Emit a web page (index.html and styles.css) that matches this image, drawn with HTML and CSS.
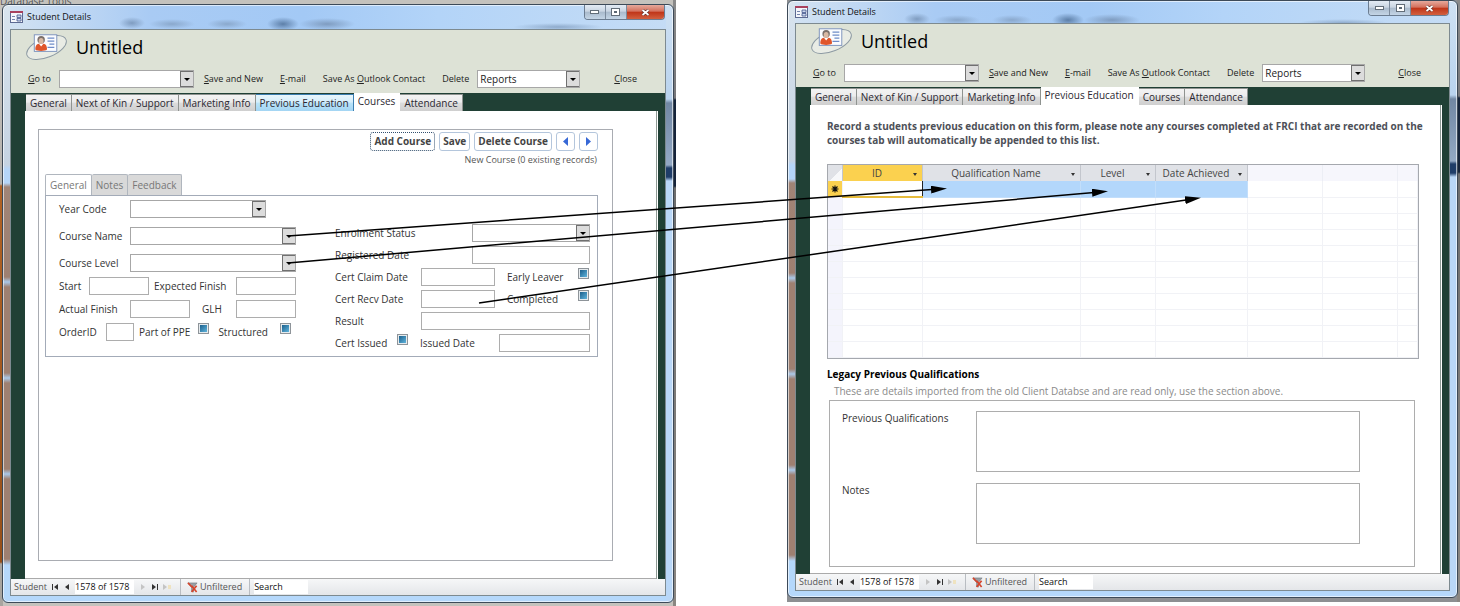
FILE: index.html
```html
<!DOCTYPE html>
<html lang="en">
<head>
  <meta charset="UTF-8"/>
  <meta name="viewport" content="width=device-width, initial-scale=1.0"/>
  <title>Student Details</title>
  <link rel="stylesheet" href="styles.css">
</head>
<body>
  <!-- Shared icons -->
  <svg class="defs" aria-hidden="true">
    <symbol id="icon-form" viewBox="0 0 13 12">
      <rect x="0.5" y="0.5" width="12" height="11" fill="#f4f6fb" stroke="#5d6a92"/>
      <rect x="0" y="0" width="13" height="2" fill="#a8415e"/>
      <path d="M2 5.500h3M2 8.500h3" stroke="#7484ad"/>
      <path d="M7 4h4v2.500H7zM7 7.500h4V10H7z" fill="#cdd7ee" stroke="#43558c" stroke-width="0.800"/>
    </symbol>
    <symbol id="icon-contact" viewBox="0 0 44 30">
      <ellipse cx="21" cy="15.500" rx="21.500" ry="10" transform="rotate(-22 21 15.500)" fill="#e9ece5" stroke="#8d9aa3"/>
      <rect x="8.500" y="2.500" width="23" height="17" fill="#fbfcff" stroke="#7f95bd"/>
      <path d="M22 6h7M22 9h7M24 12h5M22 15.500h7" stroke="#6f8cc8" stroke-width="1.300"/>
      <path d="M9.500 17.500c0-5 2.500-6 6-6s6 1 6 6c-2 2-10 2-12 0z" fill="#e0562b"/>
      <path d="M13 11.500l2.500 3 2.500-3z" fill="#fff"/>
      <circle cx="15.500" cy="7.500" r="3.800" fill="#7b706b"/>
      <ellipse cx="15.500" cy="8.800" rx="2.500" ry="3" fill="#d9b9a3"/>
    </symbol>
    <symbol id="icon-filter" viewBox="0 0 12 12">
      <path d="M1 1h10L7 6v5l-2-1V6z" fill="#9aa0a6" stroke="#6b7076" stroke-width="0.600"/>
      <path d="M1 1l5 5M5 4l5.500 7M10.500 4L5 11" stroke="#d6452c" stroke-width="1.800" fill="none"/>
    </symbol>
  </svg>

  <main class="board">
    <!-- Source form -->
    <section class="capture capture-left">
      <span class="behind">Database Tools</span>
      <div class="window">
        <div class="titlebar">
          <svg class="form-icon"><use href="#icon-form"/></svg>
          <span class="caption">Student Details</span>
          <div class="window-buttons">
            <button class="win-btn" aria-label="Minimize"><i class="min"></i></button>
            <button class="win-btn" aria-label="Restore"><i class="max"></i></button>
            <button class="win-btn win-close" aria-label="Close window"><svg viewBox="0 0 9 7"><path d="M1.500 1l6 5M7.500 1l-6 5" stroke="#5b2a24" stroke-width="3"/><path d="M1.500 1l6 5M7.500 1l-6 5" stroke="#fff" stroke-width="1.800"/></svg></button>
          </div>
        </div>
        <div class="client">
          <header class="form-header">
            <div class="heading">
              <svg class="contact-icon"><use href="#icon-contact"/></svg>
              <h1>Untitled</h1>
            </div>
            <div class="toolbar">
              <label for="goto-a"><u>G</u>o to</label>
              <select id="goto-a" class="combo goto"><option></option></select>
              <nav class="actions">
                <a href="#"><u>S</u>ave and New</a>
                <a href="#"><u>E</u>-mail</a>
                <a href="#">Save As <u>O</u>utlook Contact</a>
                <a href="#">Delete</a>
              </nav>
              <select class="combo reports" aria-label="Reports"><option>Reports</option></select>
              <a href="#" class="close-link"><u>C</u>lose</a>
            </div>
          </header>

          <div class="form-body">
            <div class="tabs" role="tablist">
              <button class="tab" role="tab">General</button>
              <button class="tab" role="tab">Next of Kin / Support</button>
              <button class="tab" role="tab">Marketing Info</button>
              <button class="tab hot" role="tab">Previous Education</button>
              <button class="tab active" role="tab">Courses</button>
              <button class="tab" role="tab">Attendance</button>
            </div>
            <div class="page page-courses">
              <div class="subform">
                <div class="course-actions">
                  <button class="cmd focused">Add Course</button>
                  <button class="cmd">Save</button>
                  <button class="cmd">Delete Course</button>
                  <button class="cmd arrow" aria-label="Previous course"><svg viewBox="0 0 5 9"><path d="M5 0v9L0 4.500z" fill="#3768d6"/></svg></button>
                  <button class="cmd arrow" aria-label="Next course"><svg viewBox="0 0 5 9"><path d="M0 0v9l5-4.500z" fill="#3768d6"/></svg></button>
                </div>
                <p class="record-note">New Course (0 existing records)</p>
                <div class="subtabs" role="tablist">
                  <button class="subtab active" role="tab">General</button>
                  <button class="subtab" role="tab">Notes</button>
                  <button class="subtab" role="tab">Feedback</button>
                </div>
                <div class="details">
                  <div class="column column-left">
                    <div class="row tall"><label class="lead" for="year">Year Code</label><select id="year" class="combo year"><option></option></select></div>
                    <div class="row tall"><label class="lead" for="course">Course Name</label><select id="course" class="combo fill"><option></option></select></div>
                    <div class="row"><label class="lead" for="level">Course Level</label><select id="level" class="combo fill"><option></option></select></div>
                    <div class="row"><label class="lead-start" for="start">Start</label><input id="start" class="box date" type="text"><label class="after" for="expected">Expected Finish</label><input id="expected" class="box date end" type="text"></div>
                    <div class="row"><label class="lead" for="actual">Actual Finish</label><input id="actual" class="box date" type="text"><label class="after-wide" for="glh">GLH</label><input id="glh" class="box date end" type="text"></div>
                    <div class="row"><label class="lead-order" for="order">OrderID</label><input id="order" class="box order" type="text"><label class="after" for="ppe">Part of PPE</label><input id="ppe" class="check ppe" type="checkbox"><label class="after-check" for="structured">Structured</label><input id="structured" class="check end" type="checkbox"></div>
                  </div>
                  <div class="column column-right">
                    <div class="row"><label for="status">Enrolment Status</label><select id="status" class="combo wide end"><option></option></select></div>
                    <div class="row"><label for="registered">Registered Date</label><input id="registered" class="box wide end" type="text"></div>
                    <div class="row"><label class="lead-right" for="claim">Cert Claim Date</label><input id="claim" class="box cert" type="text"><label class="after-wide" for="leaver">Early Leaver</label><input id="leaver" class="check end" type="checkbox"></div>
                    <div class="row"><label class="lead-right" for="recv">Cert Recv Date</label><input id="recv" class="box cert" type="text"><label class="after-wide" for="completed">Completed</label><input id="completed" class="check end" type="checkbox"></div>
                    <div class="row"><label class="lead-right" for="result">Result</label><input id="result" class="box fill" type="text"></div>
                    <div class="row"><label class="lead-issued" for="issued">Cert Issued</label><input id="issued" class="check" type="checkbox"><label class="after-wide" for="issued-date">Issued Date</label><input id="issued-date" class="box issued end" type="text"></div>
                  </div>
                </div>
              </div>
            </div>
          </div>

          <footer class="statusbar">
            <span class="status-name">Student</span>
            <button class="nav-btn" aria-label="First record"><svg viewBox="0 0 8 8"><path d="M1 1h1v6H1zM7 1v6L3 4z"/></svg></button>
            <button class="nav-btn" aria-label="Previous record"><svg viewBox="0 0 8 8"><path d="M6 1v6L2 4z"/></svg></button>
            <input class="position" type="text" value="1578 of 1578" aria-label="Current record">
            <button class="nav-btn dim" aria-label="Next record"><svg viewBox="0 0 8 8"><path d="M2 1v6l4-3z"/></svg></button>
            <button class="nav-btn" aria-label="Last record"><svg viewBox="0 0 8 8"><path d="M6 1h1v6H6zM1 1v6l4-3z"/></svg></button>
            <button class="nav-btn dim" aria-label="New record"><svg viewBox="0 0 8 8"><path d="M0 1v6l4-3z"/><path d="M5 2h3v4H5z" fill="#efe3c0"/></svg></button>
            <button class="filter"><svg><use href="#icon-filter"/></svg>Unfiltered</button>
            <input class="search" type="text" value="Search" aria-label="Search">
          </footer>
        </div>
      </div>
    </section>

    <!-- Target form -->
    <section class="capture capture-right">
      <div class="window">
        <div class="titlebar">
          <svg class="form-icon"><use href="#icon-form"/></svg>
          <span class="caption">Student Details</span>
          <div class="window-buttons">
            <button class="win-btn" aria-label="Minimize"><i class="min"></i></button>
            <button class="win-btn" aria-label="Restore"><i class="max"></i></button>
            <button class="win-btn win-close" aria-label="Close window"><svg viewBox="0 0 9 7"><path d="M1.500 1l6 5M7.500 1l-6 5" stroke="#5b2a24" stroke-width="3"/><path d="M1.500 1l6 5M7.500 1l-6 5" stroke="#fff" stroke-width="1.800"/></svg></button>
          </div>
        </div>
        <div class="client">
          <header class="form-header">
            <div class="heading">
              <svg class="contact-icon"><use href="#icon-contact"/></svg>
              <h1>Untitled</h1>
            </div>
            <div class="toolbar">
              <label for="goto-b"><u>G</u>o to</label>
              <select id="goto-b" class="combo goto"><option></option></select>
              <nav class="actions">
                <a href="#"><u>S</u>ave and New</a>
                <a href="#"><u>E</u>-mail</a>
                <a href="#">Save As <u>O</u>utlook Contact</a>
                <a href="#">Delete</a>
              </nav>
              <select class="combo reports" aria-label="Reports"><option>Reports</option></select>
              <a href="#" class="close-link"><u>C</u>lose</a>
            </div>
          </header>

          <div class="form-body">
            <div class="tabs" role="tablist">
              <button class="tab" role="tab">General</button>
              <button class="tab" role="tab">Next of Kin / Support</button>
              <button class="tab" role="tab">Marketing Info</button>
              <button class="tab active" role="tab">Previous Education</button>
              <button class="tab" role="tab">Courses</button>
              <button class="tab" role="tab">Attendance</button>
            </div>
            <div class="page page-education">
              <p class="intro">Record a students previous education on this form, please note any courses completed at FRCI that are recorded on the courses tab will automatically be appended to this list.</p>
              <div class="datasheet">
                <table>
                  <colgroup><col class="c-sel"><col class="c-id"><col class="c-name"><col class="c-level"><col class="c-date"><col class="c-free"><col class="c-free"><col></colgroup>
                  <thead>
                    <tr>
                      <th class="corner"></th>
                      <th class="current"><div class="th">ID<i class="caret"></i></div></th>
                      <th><div class="th">Qualification Name<i class="caret"></i></div></th>
                      <th><div class="th">Level<i class="caret"></i></div></th>
                      <th><div class="th">Date Achieved<i class="caret"></i></div></th>
                      <th class="free"></th><th class="free"></th><th class="free"></th>
                    </tr>
                  </thead>
                  <tbody>
                    <tr class="new-row"><td><svg viewBox="0 0 8 8"><path d="M4 0.500v7M0.500 4h7M1.500 1.500l5 5M6.500 1.500l-5 5" stroke="#111" stroke-width="1.100"/></svg></td><td></td><td></td><td></td><td></td><td></td><td></td><td></td></tr>
                    <tr><td></td><td></td><td></td><td></td><td></td><td></td><td></td><td></td></tr>
                    <tr><td></td><td></td><td></td><td></td><td></td><td></td><td></td><td></td></tr>
                    <tr><td></td><td></td><td></td><td></td><td></td><td></td><td></td><td></td></tr>
                    <tr><td></td><td></td><td></td><td></td><td></td><td></td><td></td><td></td></tr>
                    <tr><td></td><td></td><td></td><td></td><td></td><td></td><td></td><td></td></tr>
                    <tr><td></td><td></td><td></td><td></td><td></td><td></td><td></td><td></td></tr>
                    <tr><td></td><td></td><td></td><td></td><td></td><td></td><td></td><td></td></tr>
                    <tr><td></td><td></td><td></td><td></td><td></td><td></td><td></td><td></td></tr>
                    <tr><td></td><td></td><td></td><td></td><td></td><td></td><td></td><td></td></tr>
                    <tr><td></td><td></td><td></td><td></td><td></td><td></td><td></td><td></td></tr>
                  </tbody>
                </table>
              </div>
              <h2>Legacy Previous Qualifications</h2>
              <p class="hint">These are details imported from the old Client Databse and are read only, use the section above.</p>
              <div class="legacy">
                <div class="memo"><label for="prev">Previous Qualifications</label><textarea id="prev" readonly></textarea></div>
                <div class="memo"><label for="notes">Notes</label><textarea id="notes" readonly></textarea></div>
              </div>
            </div>
          </div>

          <footer class="statusbar">
            <span class="status-name">Student</span>
            <button class="nav-btn" aria-label="First record"><svg viewBox="0 0 8 8"><path d="M1 1h1v6H1zM7 1v6L3 4z"/></svg></button>
            <button class="nav-btn" aria-label="Previous record"><svg viewBox="0 0 8 8"><path d="M6 1v6L2 4z"/></svg></button>
            <input class="position" type="text" value="1578 of 1578" aria-label="Current record">
            <button class="nav-btn dim" aria-label="Next record"><svg viewBox="0 0 8 8"><path d="M2 1v6l4-3z"/></svg></button>
            <button class="nav-btn" aria-label="Last record"><svg viewBox="0 0 8 8"><path d="M6 1h1v6H6zM1 1v6l4-3z"/></svg></button>
            <button class="nav-btn dim" aria-label="New record"><svg viewBox="0 0 8 8"><path d="M0 1v6l4-3z"/><path d="M5 2h3v4H5z" fill="#efe3c0"/></svg></button>
            <button class="filter"><svg><use href="#icon-filter"/></svg>Unfiltered</button>
            <input class="search" type="text" value="Search" aria-label="Search">
          </footer>
        </div>
      </div>
    </section>

    <!-- Field mapping arrows -->
    <svg class="links" viewBox="0 0 1460 606" preserveAspectRatio="none" aria-hidden="true">
      <defs>
        <marker id="head" viewBox="0 0 16 8" refX="8" refY="4" markerWidth="16" markerHeight="8" markerUnits="userSpaceOnUse" orient="auto">
          <path d="M0 0l16 4-16 4z"/>
        </marker>
      </defs>
      <path d="M288 236L939 189" marker-end="url(#head)"/>
      <path d="M288 263L1100 192" marker-end="url(#head)"/>
      <path d="M479 303L1193 199" marker-end="url(#head)"/>
    </svg>
  </main>
</body>
</html>
```

FILE: styles.css
```css
* {
  box-sizing: border-box;
}

body {
  margin: 0;
  background: #fff;
  color: #3a3a3a;
  font-family: "Open Sans", "Noto Sans", sans-serif;
  font-size: 10px;
  line-height: 14px;
}

button, input, select, textarea {
  margin: 0;
  padding: 0;
  font: inherit;
  color: inherit;
  border-radius: 0;
}

a {
  color: #222;
  text-decoration: none;
}

h1, h2, p {
  margin: 0;
}

.defs {
  display: none;
}

.board {
  position: relative;
  display: flex;
  justify-content: space-between;
  min-height: 100vh;
}

.links {
  position: absolute;
  top: 0;
  left: 0;
  width: 100%;
  height: 100%;
  pointer-events: none;
  fill: none;
  stroke: #000;
  stroke-width: 1.5;
}

.links marker path {
  fill: #000;
  stroke: none;
}

/* Desktop behind each window */
.capture {
  position: relative;
  display: flex;
  overflow: hidden;
}

.capture-left {
  width: 46.3%;
  padding: 4px 2px 3px;
  background:
    linear-gradient(#8a8a8a, #77777a 98px, #16243a 100px, #16243a 186px, #6d6d6d 188px, #8b8782) right / 3px 100% no-repeat,
    linear-gradient(#c9c6c1, #b5b2ad 184px, #b06224 186px, #96501a 562px, #a8a5a0 564px) left / 3px 100% no-repeat,
    #c4c2bd;
}

.capture-right {
  width: 46.1%;
  margin-bottom: 4px;
  padding: 0 2px 4px 0;
  background:
    linear-gradient(#8a8a8a, #77777a 96px, #16243a 98px, #16243a 172px, #6d6d6d 174px, #8b8782) right / 3px 100% no-repeat,
    #8d8f92;
}

.behind {
  position: absolute;
  top: -6px;
  left: 0;
  font-size: 10px;
  color: #555;
}

/* Aero window frame */
.window {
  position: relative;
  flex: 1;
  display: flex;
  flex-direction: column;
  padding: 0 7px 6px;
  border: 1px solid #3d4a58;
  border-radius: 6px;
  background:
    linear-gradient(#d9e4ee, #c5d3e2 160px, #b5d5f8 164px, #b5d5f8 178px, #a08476 182px, #9e8071 272px, #a9c8e8 277px, #9e8071 282px, #9e8071 368px, #a9c8e8 373px, #9e8071 378px, #9e8071 464px, #a9c8e8 469px, #9e8071 474px, #9e8071 554px, #b5d8fb 560px) left / 7px 100% no-repeat,
    linear-gradient(#cfe1f3, #b9d3ee 94px, #7187a3 98px, #93a9c4 160px, #1f3d68 163px, #1f3d68 172px, #b9d7f7 176px) right / 7px 100% no-repeat,
    radial-gradient(closest-side, #7f9cc0, transparent) 116px 12px / 26px 12px no-repeat,
    radial-gradient(closest-side, #8aa8cc, transparent) 146px 14px / 46px 10px no-repeat,
    radial-gradient(closest-side, #8aa8cc, transparent) 204px 14px / 40px 10px no-repeat,
    radial-gradient(closest-side, #5d7fa8, transparent) 264px 12px / 32px 14px no-repeat,
    radial-gradient(closest-side, #7f9cc0, transparent) 296px 13px / 56px 12px no-repeat,
    radial-gradient(closest-side, #8fabcc, transparent) 510px 18px / 90px 8px no-repeat,
    linear-gradient(90deg, #d4e3f2, #a9cbf4 22%, #a3c9f5 45%, #b3d4f8 65%, #c5dcf5) top / 100% 26px no-repeat,
    #b5d8fb;
  box-shadow: inset 0 0 0 1px rgba(255, 255, 255, 0.6);
}

.titlebar {
  display: flex;
  align-items: center;
  height: 24px;
  padding-right: 1px;
  font-size: 9px;
  color: #111;
}

.capture-right .titlebar {
  height: 22px;
}

.form-icon {
  width: 13px;
  height: 12px;
  margin-right: 4px;
}

.window-buttons {
  display: flex;
  align-self: flex-start;
  margin-left: auto;
  border: 1px solid #6b7c90;
  border-top: 0;
  border-radius: 0 0 4px 4px;
  overflow: hidden;
}

.win-btn {
  display: flex;
  align-items: center;
  justify-content: center;
  width: 21px;
  height: 14px;
  border: 0;
  border-right: 1px solid #7c8b9d;
  background: linear-gradient(#e3ebf4, #c9d5e2 45%, #a9bacc 50%, #c4d5e6);
}

.min {
  width: 9px;
  height: 4px;
  border: 1px solid #626d78;
  background: #fff;
}

.max {
  width: 9px;
  height: 8px;
  border: 1px solid #626d78;
  background: #5c6874;
  box-shadow: inset 0 0 0 2px #fff;
}

.win-close {
  width: 37px;
  border-right: 0;
  background: linear-gradient(#e6a99c, #d4705c 45%, #bf3418 50%, #d2603f);
}

.win-close svg {
  width: 9px;
  height: 7px;
}

.client {
  flex: 1;
  display: flex;
  flex-direction: column;
  border: 1px solid #7d8a90;
  background: #204035;
}

/* Form header */
.form-header {
  background: #dde2d6;
}

.heading {
  display: flex;
  align-items: center;
  gap: 7px;
  height: 34px;
  padding-left: 15px;
}

.contact-icon {
  width: 43px;
  height: 30px;
}

h1 {
  font-size: 18px;
  font-weight: 400;
  line-height: 24px;
  color: #000;
}

.toolbar {
  display: flex;
  align-items: center;
  height: 29px;
  padding: 0 28px 0 17px;
  font-size: 9px;
  color: #222;
}

.combo {
  appearance: none;
  height: 18px;
  padding: 0 16px 0 2px;
  border: 1px solid #a7a7a7;
  background: #fff url("data:image/svg+xml,%3Csvg xmlns='http://www.w3.org/2000/svg' width='14' height='18'%3E%3Crect x='.5' y='1.5' width='13' height='15' fill='%23dcdcdc' stroke='%23707070'/%3E%3Cpath d='M4 8h6l-3 3z'/%3E%3C/svg%3E") right -1px center no-repeat;
}

.goto {
  width: 135px;
  margin: 0 10px 0 8px;
}

.actions {
  display: flex;
  gap: 17px;
}

.reports {
  width: 103px;
  margin-left: 8px;
  font-size: 10px;
}

.close-link {
  margin-left: auto;
}

/* Main tabs */
.form-body {
  flex: 1;
  display: flex;
  flex-direction: column;
  padding: 0 7px 0 14px;
}

.tabs {
  display: flex;
  align-items: flex-end;
  height: 18px;
  padding-left: 1px;
}

.tab {
  height: 17px;
  padding: 0 4px;
  border: 1px solid #8f9390;
  border-left-width: 0;
  border-bottom: 0;
  background: linear-gradient(#f3f3f3, #ececec 45%, #dcdcdc 50%, #cfcfcf);
  color: #2b2730;
}

.tab.hot {
  border-color: #3c7fb1;
  background: linear-gradient(#e8f5fc, #d5eefb 45%, #b9e3f9 50%, #a3d5f3);
}

.tab.active {
  height: 18px;
  padding-bottom: 3px;
  border-color: #fff;
  background: #fff;
}

.page {
  flex: 1;
  border-right: 1px solid #fff;
  background: #fff;
  box-shadow: inset -1px 0 0 #8d9a94, inset 0 -1px 0 #aaa;
}

/* Courses page */
.page-courses {
  display: flex;
  padding: 18px 44px 18px 13px;
}

.subform {
  flex: 1;
  padding: 2px 14px 0 6px;
  border: 1px solid #a9acb2;
}

.course-actions {
  display: flex;
  justify-content: flex-end;
  gap: 4px;
}

.cmd {
  height: 19px;
  padding: 0 3px 1px;
  border: 1px solid #b4c6dc;
  border-radius: 3px;
  background: #fff;
  color: #444;
  font-weight: 700;
}

.cmd.focused {
  border: 1px dotted #33506e;
}

.cmd.arrow {
  width: 19px;
}

.cmd svg {
  display: block;
  width: 5px;
  height: 9px;
  margin: 0 auto;
}

.record-note {
  padding: 2px 1px 0 0;
  text-align: right;
  font-size: 9px;
  color: #555;
}

.subtabs {
  display: flex;
  margin-top: 7px;
}

.subtab {
  height: 21px;
  padding: 0 4px;
  border: 1px solid #b0b6be;
  border-bottom: 0;
  border-left-width: 0;
  border-radius: 2px 2px 0 0;
  background: #d9d9d9;
  color: #777;
}

.subtab.active {
  border-left-width: 1px;
  background: #fff;
}

.details {
  display: flex;
  justify-content: space-between;
  padding: 4px 7px 4px 13px;
  border: 1px solid #a3abb8;
}

.column {
  display: flex;
  flex-direction: column;
  gap: 5px;
}

.column-left {
  width: 237px;
}

.column-right {
  width: 255px;
  gap: 4px;
  padding-top: 24px;
}

.row {
  display: flex;
  align-items: center;
  height: 18px;
  color: #333;
}

.row.tall {
  margin-bottom: 4px;
}

.lead {
  width: 71px;
}

.lead-start {
  width: 30px;
}

.lead-order {
  width: 47px;
}

.lead-right {
  width: 86px;
}

.lead-issued {
  width: 62px;
}

.after {
  margin-left: 5px;
}

.after-check {
  margin-left: 9px;
}

.after-wide {
  margin-left: 12px;
}

.end {
  margin-left: auto;
}

.fill {
  flex: 1;
}

.year {
  width: 136px;
}

.box {
  height: 18px;
  border: 1px solid #adadad;
  background: #fff;
}

.date {
  width: 60px;
}

.order {
  width: 28px;
}

.wide {
  width: 118px;
}

.cert {
  width: 74px;
}

.issued {
  width: 91px;
}

.check {
  appearance: none;
  align-self: flex-start;
  width: 11px;
  height: 11px;
  border: 1px solid #8e9499;
  background: linear-gradient(135deg, #1b5f8c, #5fb4dc) content-box, #e6ebee;
  padding: 1px;
}

.ppe {
  margin-left: 8px;
}

.column-left .check.end {
  margin-right: 5px;
}

.column-right .check.end {
  margin-right: 1px;
}

/* Previous education page */
.page-education {
  padding: 14px 22px 4px 17px;
}

.intro {
  margin-right: -8px;
  font-weight: 700;
  color: #4d5058;
}

.datasheet {
  height: 195px;
  margin-top: 17px;
  border: 1px solid #a5a8ae;
  overflow: hidden;
}

table {
  width: 100%;
  border-collapse: collapse;
  table-layout: fixed;
}

.c-sel {
  width: 15px;
}

.c-id {
  width: 80px;
}

.c-name {
  width: 158px;
}

.c-level {
  width: 75px;
}

.c-date {
  width: 92px;
}

.c-free {
  width: 75px;
}

th, td {
  height: 16px;
  padding: 0;
  border: 1px solid #f1f2f6;
  border-top: 0;
  border-left: 0;
  line-height: 15px;
}

th {
  border-color: #c3c6cd;
  border-bottom: 0;
  background: #e0e2e7;
  color: #444;
  font-weight: 400;
}

.corner {
  background: linear-gradient(135deg, #e0e2e7 60%, #f7f8fa 60%);
}

.th {
  position: relative;
  padding-right: 12px;
}

.caret {
  position: absolute;
  top: 7px;
  right: 5px;
  border: 2px solid transparent;
  border-top: 3px solid #333;
  border-bottom: 0;
}

.current {
  background: #fbd14f;
}

.free {
  border-color: #eceef5;
  background: #f6f6fc;
}

td:first-child {
  background: #f4f4fc;
}

.new-row td:first-child {
  background: #fbd14f;
  text-align: center;
}

.new-row svg {
  display: block;
  width: 8px;
  height: 8px;
  margin: 0 auto;
}

.new-row td:nth-child(2) {
  border-right: 1px solid #222;
  border-bottom: 2px solid #e6bb3c;
}

.new-row td:nth-child(n+3):nth-child(-n+5) {
  border-color: #c2defb;
  background: #b3d7fb;
}

h2 {
  margin-top: 8px;
  font-size: 10px;
  line-height: 14px;
  color: #000;
}

.hint {
  padding: 3px 0 2px 7px;
  color: #8a8a8a;
}

.legacy {
  display: flex;
  flex-direction: column;
  gap: 11px;
  margin: 0 4px 0 2px;
  padding: 10px 54px 22px 12px;
  border: 1px solid #adadad;
}

.memo {
  display: flex;
}

.memo label {
  width: 134px;
  color: #333;
}

.memo textarea {
  flex: 1;
  height: 61px;
  border: 1px solid #adadad;
  background: #fff;
  resize: none;
}

/* Record navigation */
.statusbar {
  display: flex;
  align-items: center;
  height: 16px;
  padding-left: 3px;
  background: linear-gradient(#f6f7f8, #e4e6e9);
  font-size: 9px;
  color: #555;
}

.status-name {
  width: 37px;
}

.nav-btn {
  display: flex;
  align-items: center;
  width: 12px;
  height: 14px;
  border: 0;
  background: none;
  fill: #333;
}

.nav-btn svg {
  width: 8px;
  height: 8px;
}

.nav-btn.dim {
  fill: #c4c4c4;
}

.position {
  width: 59px;
  height: 14px;
  margin-right: 5px;
  border: 0;
  background: #fff;
  color: #111;
}

.filter {
  display: flex;
  align-items: center;
  gap: 2px;
  height: 16px;
  margin-left: 5px;
  padding: 0 7px 0 6px;
  border: 1px solid #b9bdc2;
  border-width: 0 1px;
  background: none;
}

.filter svg {
  width: 11px;
  height: 11px;
}

.search {
  width: 54px;
  height: 14px;
  margin-left: 4px;
  border: 0;
  background: #fff;
  color: #111;
}
```
